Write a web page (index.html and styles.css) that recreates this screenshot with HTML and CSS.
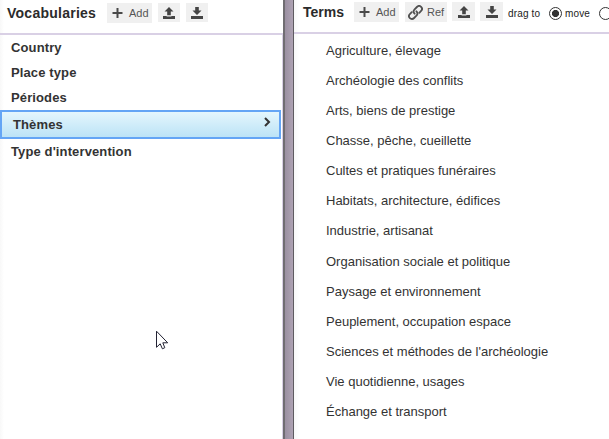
FILE: index.html
```html
<!DOCTYPE html>
<html lang="fr">
<head>
<meta charset="utf-8">
<title>Vocabularies</title>
<link rel="stylesheet" href="styles.css">
</head>
<body>
<svg class="defs" width="0" height="0">
  <symbol id="plus" viewBox="0 0 11 11"><path d="M5.5 0V10M0.5 5H10.5" fill="none" stroke="#4a4a4a" stroke-width="2"/></symbol>
  <symbol id="up" viewBox="0 0 12 12"><path d="M6 0L10.5 4.6H7.8V8.2H4.2V4.6H1.5Z"/><path d="M0 9H3.6V9.6H8.4V9H12V12H0Z"/></symbol>
  <symbol id="down" viewBox="0 0 12 12"><path d="M6 8L10.5 3.6H7.8V0H4.2V3.6H1.5Z"/><path d="M0 9H12V12H0Z"/></symbol>
  <symbol id="link" viewBox="0 0 15 15"><g fill="none" stroke="#505050" stroke-width="1.8" stroke-linecap="round"><path d="M6.6 8.7C5.2 7.4 5.4 5.6 6.6 4.3L8.9 2C10.2.7 12 .7 13.1 1.8S14.3 4.7 13.1 6L11.3 7.8"/><path d="M8.4 6.3C9.8 7.6 9.6 9.4 8.4 10.7L6.1 13C4.8 14.3 3 14.3 1.9 13.2S.7 10.3 1.9 9L3.7 7.2"/></g></symbol>
</svg>
<div class="app">
  <section class="panel vocabularies">
    <header class="bar">
      <h2>Vocabularies</h2>
      <div class="tools">
        <span class="button add"><svg width="11" height="11"><use href="#plus"/></svg>Add</span>
        <span class="button icon"><svg width="12" height="12"><use href="#up"/></svg></span>
        <span class="button icon"><svg width="12" height="12"><use href="#down"/></svg></span>
      </div>
    </header>
    <ul class="vocab-list">
      <li>Country</li>
      <li>Place type</li>
      <li>Périodes</li>
      <li class="selected">Thèmes<svg width="7" height="10" viewBox="0 0 7 10"><path d="M1 1L5 5L1 9" fill="none" stroke="#333" stroke-width="2"/></svg></li>
      <li>Type d'intervention</li>
    </ul>
  </section>
  <div class="splitter"></div>
  <section class="panel terms">
    <header class="bar">
      <h2>Terms</h2>
      <div class="tools">
        <span class="button add"><svg width="11" height="11"><use href="#plus"/></svg>Add</span>
        <span class="button ref"><svg width="15" height="15"><use href="#link"/></svg>Ref</span>
        <span class="button icon"><svg width="12" height="12"><use href="#up"/></svg></span>
        <span class="button icon"><svg width="12" height="12"><use href="#down"/></svg></span>
      </div>
      <div class="drag">
        <span class="drag-label">drag to</span>
        <span class="radio checked"></span>
        <span class="move-label">move</span>
        <span class="radio"></span>
      </div>
    </header>
    <ul class="term-list">
      <li>Agriculture, élevage</li>
      <li>Archéologie des conflits</li>
      <li>Arts, biens de prestige</li>
      <li>Chasse, pêche, cueillette</li>
      <li>Cultes et pratiques funéraires</li>
      <li>Habitats, architecture, édifices</li>
      <li>Industrie, artisanat</li>
      <li>Organisation sociale et politique</li>
      <li>Paysage et environnement</li>
      <li>Peuplement, occupation espace</li>
      <li>Sciences et méthodes de l'archéologie</li>
      <li>Vie quotidienne, usages</li>
      <li>Échange et transport</li>
    </ul>
  </section>
</div>
<svg class="cursor" width="13" height="20" viewBox="0 0 13 20"><path d="M.5 1.2V17.3L4.2 13.8L6.4 18.8L8.8 17.7L6.8 12.8H11.7Z" fill="#fff" stroke="#223" stroke-width="1"/></svg>
</body>
</html>
```
FILE: styles.css
```css
* { box-sizing: border-box; }
body {
  margin: 0;
  overflow: hidden;
  background: #fff;
  color: #333;
  font-family: "Liberation Sans", Arial, sans-serif;
  font-size: 13px;
}
.defs { position: absolute; }
.app { display: flex; height: 439px; width: 609px; overflow: hidden; }
.panel { display: flex; flex-direction: column; }
.vocabularies { flex: 0 0 283px; background: linear-gradient(90deg, #f8f8f8, #fff 4px); }
.terms { flex: 0 0 315px; overflow: hidden; background: linear-gradient(90deg, #f8f8f8, #fff 5px); }
.splitter {
  flex: 0 0 11px;
  border-left: 2px solid #706d72;
  border-right: 1px solid #5f5b61;
  background: linear-gradient(90deg, #9b90a2, #aea2b3);
}
.bar { display: flex; flex: none; align-items: flex-start; border-bottom: 2px solid #d9d0e5; }
.vocabularies .bar { height: 35px; padding: 3px 0 0 7px; }
.terms .bar { height: 34px; padding: 2px 0 0 9px; }
h2 {
  flex: none;
  margin: 0;
  color: #2b2b2b;
  font-size: 14px;
  line-height: 20px;
  letter-spacing: 0.25px;
  white-space: nowrap;
}
.vocabularies h2 { width: 100px; }
.terms h2 { width: 51px; letter-spacing: 0; }
.tools { display: flex; flex: none; }
.button {
  display: flex;
  flex: none;
  align-items: center;
  height: 20px;
  background: #f0f0f0;
  color: #555;
  font-size: 11px;
  fill: #444;
}
.add { width: 45px; padding-left: 5px; gap: 6px; margin-right: 6px; }
.ref { width: 42px; padding-left: 3px; gap: 4px; margin-right: 5px; }
.icon { width: 22px; height: 19px; justify-content: center; margin-right: 6px; }
.terms .icon { width: 23px; margin-right: 5px; }
.drag { display: flex; flex: none; align-items: center; height: 22px; color: #222; font-size: 10px; letter-spacing: 0.15px; white-space: nowrap; }
.drag-label { width: 41px; }
.move-label { width: 34px; }
.radio { flex: 0 0 13px; height: 13px; margin-right: 3px; border: 1px solid #333; border-radius: 50%; background: #fff; }
.checked { background: radial-gradient(circle, #333 3.2px, #fff 3.9px); }
ul { margin: 0; padding: 0; list-style: none; }
.vocab-list { flex: 1; border-right: 1px solid #d9d0e5; font-weight: bold; letter-spacing: 0.12px; }
.vocab-list li { height: 25px; line-height: 25px; padding-left: 11px; }
.vocab-list .selected {
  display: flex;
  justify-content: space-between;
  width: 281px;
  height: 29px;
  border: 2px solid #64a5f5;
  background: linear-gradient(#e4f6fd, #bce3f6);
}
.selected svg { margin: 5px 8px 0 0; }
.term-list { padding: 1px 0 0 32px; }
.term-list li { height: 30.08px; line-height: 31px; white-space: nowrap; }
.cursor { position: absolute; left: 156px; top: 330px; }
```
